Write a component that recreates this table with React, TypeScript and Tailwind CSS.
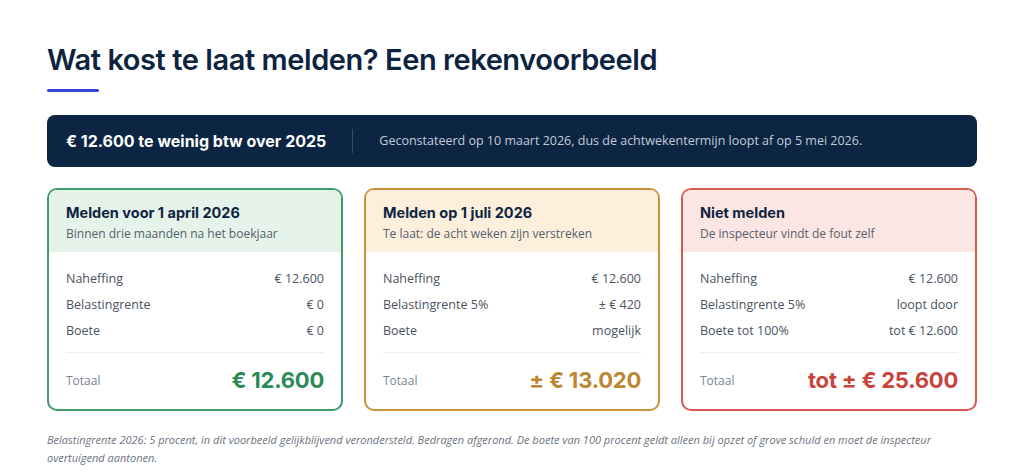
const body = { fontFamily: '"Open Sans", "Liberation Sans", sans-serif' };
const display = { fontFamily: 'Inter, "Liberation Sans", sans-serif' };

type Row = { label: string; value: string };

type Scenario = {
  title: string;
  subtitle: string;
  rows: Row[];
  total: string;
  border: string;
  head: string;
  totalColor: string;
};

const scenarios: Scenario[] = [
  {
    title: 'Melden voor 1 april 2026',
    subtitle: 'Binnen drie maanden na het boekjaar',
    rows: [
      { label: 'Naheffing', value: '€ 12.600' },
      { label: 'Belastingrente', value: '€ 0' },
      { label: 'Boete', value: '€ 0' },
    ],
    total: '€ 12.600',
    border: 'border-[#3e9c6b]',
    head: 'bg-[#e6f3ea]',
    totalColor: 'text-[#2b8a57]',
  },
  {
    title: 'Melden op 1 juli 2026',
    subtitle: 'Te laat: de acht weken zijn verstreken',
    rows: [
      { label: 'Naheffing', value: '€ 12.600' },
      { label: 'Belastingrente 5%', value: '± € 420' },
      { label: 'Boete', value: 'mogelijk' },
    ],
    total: '± € 13.020',
    border: 'border-[#c9923c]',
    head: 'bg-[#fcf0dd]',
    totalColor: 'text-[#c08530]',
  },
  {
    title: 'Niet melden',
    subtitle: 'De inspecteur vindt de fout zelf',
    rows: [
      { label: 'Naheffing', value: '€ 12.600' },
      { label: 'Belastingrente 5%', value: 'loopt door' },
      { label: 'Boete tot 100%', value: 'tot € 12.600' },
    ],
    total: 'tot ± € 25.600',
    border: 'border-[#d65a50]',
    head: 'bg-[#fce6e4]',
    totalColor: 'text-[#c8433a]',
  },
];

const ScenarioCard = ({ s }: { s: Scenario }) => (
  <div className={`flex flex-col overflow-hidden rounded-[10px] border-2 bg-white ${s.border}`}>
    <div className={`px-[17px] pt-[12px] pb-[10px] ${s.head}`}>
      <h3 className="text-[14.5px] font-bold leading-[22px] text-[#0d2440]" style={display}>
        {s.title}
      </h3>
      <p className="mt-[2px] text-[12px] leading-[16px] text-[#55606e]" style={body}>
        {s.subtitle}
      </p>
    </div>
    <div className="px-[17px] pt-[18px] pb-[14px]" style={body}>
      <div className="space-y-[8px]">
        {s.rows.map((r) => (
          <div key={r.label} className="flex items-center justify-between text-[12.5px] leading-[18px] text-[#4a5361]">
            <span>{r.label}</span>
            <span>{r.value}</span>
          </div>
        ))}
      </div>
      <div className="mt-[12px] flex items-center justify-between border-t border-[#eceef1] pt-[12px]">
        <span className="mt-[2px] text-[12px] leading-[16px] text-[#7b8494]">Totaal</span>
        <span className={`text-[22px] font-bold leading-[30px] tracking-[-0.01em] ${s.totalColor}`} style={display}>
          {s.total}
        </span>
      </div>
    </div>
  </div>
);

export default function App() {
  return (
    <div className="min-h-screen bg-white px-[47px] pt-[40px]" style={body}>
      <h1 className="text-[29px] font-semibold leading-[40px] tracking-[-0.015em] text-[#0d2440]" style={display}>
        Wat kost te laat melden? Een rekenvoorbeeld
      </h1>
      <div className="mt-[9px] h-[3px] w-[52px] rounded-full bg-[#3446d6]" />

      <div className="mt-[23px] flex h-[52px] items-center rounded-[8px] bg-[#0c2542] px-[19px]">
        <span className="text-[16px] font-bold text-white" style={display}>
          € 12.600 te weinig btw over 2025
        </span>
        <div className="mx-[26px] h-[24px] w-px bg-[#3a4d66]" />
        <span className="text-[12.5px] text-[#c3cbd6]">
          Geconstateerd op 10 maart 2026, dus de achtwekentermijn loopt af op 5 mei 2026.
        </span>
      </div>

      <div className="mt-[21px] grid grid-cols-3 gap-[21px]">
        {scenarios.map((s) => (
          <ScenarioCard key={s.title} s={s} />
        ))}
      </div>

      <p className="mt-[20px] text-[11px] italic leading-[18px] text-[#6b7280]">
        Belastingrente 2026: 5 procent, in dit voorbeeld gelijkblijvend verondersteld. Bedragen afgerond. De boete van 100 procent geldt alleen bij opzet of grove schuld en moet de inspecteur overtuigend aantonen.
      </p>
    </div>
  );
}
